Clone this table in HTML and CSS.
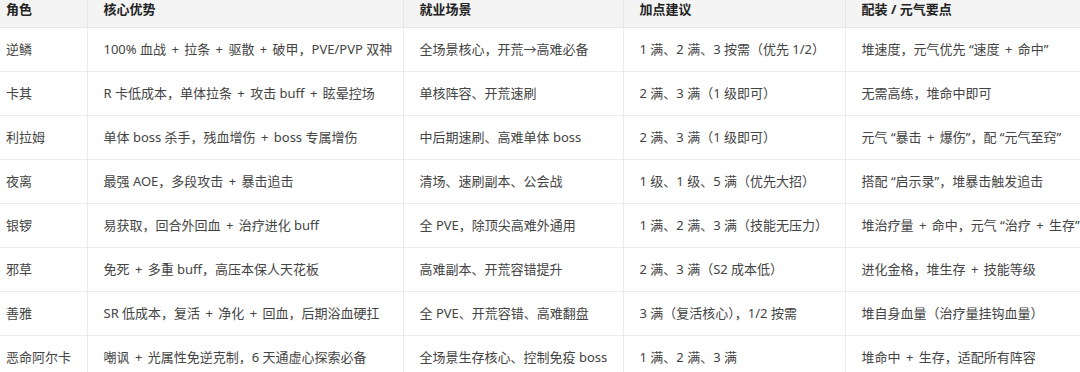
FILE: index.html
```html
<!DOCTYPE html>
<html lang="zh-CN">
<head>
    <meta charset="UTF-8">
    <meta name="viewport" content="width=device-width, initial-scale=1.0">
    <title>角色定位</title>
    <link rel="stylesheet" href="styles.css">
</head>
<body>
    <div class="table-wrap">
        <table class="role-table">
            <colgroup>
                <col class="col-name">
                <col class="col-adv">
                <col class="col-scene">
                <col class="col-points">
                <col class="col-gear">
            </colgroup>
            <thead>
                <tr>
                    <th>角色</th>
                    <th>核心优势</th>
                    <th>就业场景</th>
                    <th>加点建议</th>
                    <th>配装 / 元气要点</th>
                </tr>
            </thead>
            <tbody>
                <tr>
                    <td>逆鳞</td>
                    <td>100% 血战 <span class="plus">+</span> 拉条 <span class="plus">+</span> 驱散 <span class="plus">+</span> 破甲，PVE/PVP 双神</td>
                    <td>全场景核心，开荒→高难必备</td>
                    <td>1 满、2 满、3 按需（优先 1/2）</td>
                    <td>堆速度，元气优先 “速度 <span class="plus">+</span> 命中”</td>
                </tr>
                <tr>
                    <td>卡其</td>
                    <td>R 卡低成本，单体拉条 <span class="plus">+</span> 攻击 buff <span class="plus">+</span> 眩晕控场</td>
                    <td>单核阵容、开荒速刷</td>
                    <td>2 满、3 满（1 级即可）</td>
                    <td>无需高练，堆命中即可</td>
                </tr>
                <tr>
                    <td>利拉姆</td>
                    <td>单体 boss 杀手，残血增伤 <span class="plus">+</span> boss 专属增伤</td>
                    <td>中后期速刷、高难单体 boss</td>
                    <td>2 满、3 满（1 级即可）</td>
                    <td>元气 “暴击 <span class="plus">+</span> 爆伤”，配 “元气至窍”</td>
                </tr>
                <tr>
                    <td>夜离</td>
                    <td>最强 AOE，多段攻击 <span class="plus">+</span> 暴击追击</td>
                    <td>清场、速刷副本、公会战</td>
                    <td>1 级、1 级、5 满（优先大招）</td>
                    <td>搭配 “启示录”，堆暴击触发追击</td>
                </tr>
                <tr>
                    <td>银锣</td>
                    <td>易获取，回合外回血 <span class="plus">+</span> 治疗进化 buff</td>
                    <td>全 PVE，除顶尖高难外通用</td>
                    <td>1 满、2 满、3 满（技能无压力）</td>
                    <td>堆治疗量 <span class="plus">+</span> 命中，元气 “治疗 <span class="plus">+</span> 生存”</td>
                </tr>
                <tr>
                    <td>邪草</td>
                    <td>免死 <span class="plus">+</span> 多重 buff，高压本保人天花板</td>
                    <td>高难副本、开荒容错提升</td>
                    <td>2 满、3 满（S2 成本低）</td>
                    <td>进化金格，堆生存 <span class="plus">+</span> 技能等级</td>
                </tr>
                <tr>
                    <td>善雅</td>
                    <td>SR 低成本，复活 <span class="plus">+</span> 净化 <span class="plus">+</span> 回血，后期浴血硬扛</td>
                    <td>全 PVE、开荒容错、高难翻盘</td>
                    <td>3 满（复活核心），1/2 按需</td>
                    <td>堆自身血量（治疗量挂钩血量）</td>
                </tr>
                <tr>
                    <td>恶命阿尔卡</td>
                    <td>嘲讽 <span class="plus">+</span> 光属性免逆克制，6 天通虚心探索必备</td>
                    <td>全场景生存核心、控制免疫 boss</td>
                    <td>1 满、2 满、3 满</td>
                    <td>堆命中 <span class="plus">+</span> 生存，适配所有阵容</td>
                </tr>
            </tbody>
        </table>
    </div>
</body>
</html>
```

FILE: styles.css
```css
body {
    margin: 0;
    background: #ffffff;
    font-family: "Noto Sans", "Noto Sans CJK SC", sans-serif;
    color: #444444;
}

.table-wrap {
    width: 1080px;
    height: 372px;
    overflow: hidden;
}

.role-table {
    width: 1260px;
    table-layout: fixed;
    border-collapse: collapse;
    font-size: 13px;
}

.col-name { width: 87px; }
.col-adv { width: 316px; }
.col-scene { width: 220px; }
.col-points { width: 222px; }
.col-gear { width: 415px; }

.role-table th {
    background: #f4f4f5;
    color: #222222;
    font-weight: 700;
    text-align: left;
    line-height: 18px;
    padding: 0 16px 9px;
    border-bottom: 1px solid #e6e6e6;
    border-right: 1px solid #e6e6e6;
}

.role-table td {
    line-height: 19px;
    padding: 12px 16px;
    border-bottom: 1px solid #ececec;
    border-right: 1px solid #ececec;
    white-space: nowrap;
}

.role-table th:first-child,
.role-table td:first-child {
    padding-left: 6px;
}

/* plus signs sit wider in the source font */
.plus {
    margin: 0 2px;
}
```
